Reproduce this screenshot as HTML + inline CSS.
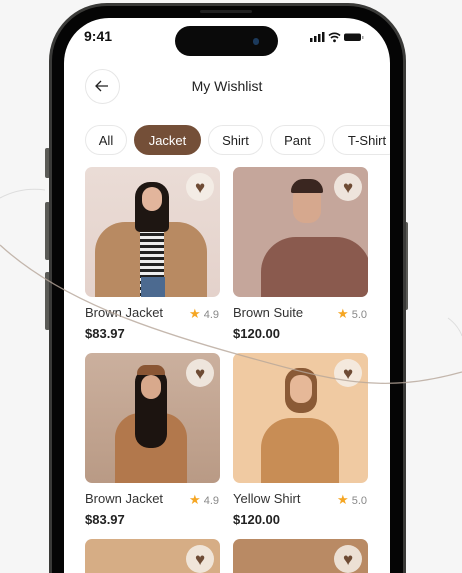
<!DOCTYPE html>
<html style="width:462px;height:573px;overflow:hidden"><head><style>
*{margin:0;padding:0;box-sizing:border-box}
body{width:462px;height:573px;overflow:hidden;background:#f6f6f6;font-family:"Liberation Sans",sans-serif;position:relative}
#wrap{position:absolute;left:0;top:0;width:462px;height:573px;overflow:hidden}
.abs{position:absolute}
.rim{left:49px;top:3px;width:357px;height:570px;border-radius:58px 58px 0 0;background:#3a3a38;}
.body{left:52px;top:6px;width:351px;height:567px;border-radius:55px 55px 0 0;background:#050505}
.screen{left:64px;top:18px;width:326px;height:555px;border-radius:45px 45px 0 0;background:#fff;overflow:hidden}
.btn{background:#5a5a56;border-radius:2px}
.chip{position:absolute;top:107px;height:30px;border:1px solid #e8e8e8;border-radius:15px;font-size:13px;color:#222;display:flex;align-items:center;justify-content:center;background:#fff}
.img{position:absolute;width:135px;height:130px;border-radius:7px;overflow:hidden}
.heart{position:absolute;right:6px;top:6px;width:28px;height:28px;border-radius:50%;background:rgba(245,238,232,.85);display:flex;align-items:center;justify-content:center;color:#6e4b34;font-size:17px;line-height:1}
.name{position:absolute;font-size:13px;color:#333}
.price{position:absolute;font-size:13px;color:#222;font-weight:bold}
.rate{position:absolute;font-size:11px;color:#888}
.rate b{color:#f5a623;font-size:13px;font-weight:normal}
</style></head><body><div id="wrap">
<div class="abs btn" style="left:45px;top:148px;width:5px;height:30px"></div>
<div class="abs btn" style="left:45px;top:202px;width:5px;height:58px"></div>
<div class="abs btn" style="left:45px;top:272px;width:5px;height:58px"></div>
<div class="abs btn" style="left:403px;top:222px;width:5px;height:88px"></div>
<div class="abs rim"></div>
<div class="abs body"></div>
<div class="abs" style="left:200px;top:10px;width:52px;height:3px;background:#222;border-radius:2px"></div>
<div class="abs screen">
  <div class="abs" style="left:20px;top:10px;font-size:14px;font-weight:bold;color:#111">9:41</div>
  <div class="abs" style="left:111px;top:8px;width:103px;height:30px;border-radius:15px;background:#0a0a0a"></div>
  <div class="abs" style="left:189px;top:20px;width:6px;height:7px;border-radius:3px;background:#1c3a5c"></div>
  <svg class="abs" style="left:245px;top:13px" width="56" height="12" viewBox="0 0 56 12">
    <rect x="1" y="7" width="2.5" height="4" fill="#111"/><rect x="5" y="5" width="2.5" height="6" fill="#111"/><rect x="9" y="3" width="2.5" height="8" fill="#111"/><rect x="13" y="1" width="2.5" height="10" fill="#111"/>
    <path d="M20 4.5a8 8 0 0 1 11 0M22 7a5 5 0 0 1 7 0" stroke="#111" stroke-width="1.6" fill="none"/><circle cx="25.5" cy="9.8" r="1.4" fill="#111"/>
    <rect x="35" y="2.5" width="17" height="7.5" rx="2" fill="#111"/><rect x="53" y="5" width="1.5" height="3" fill="#999"/>
  </svg>
  <div class="abs" style="left:21px;top:51px;width:35px;height:35px;border-radius:50%;border:1px solid #e6e6e6"></div>
  <svg class="abs" style="left:30px;top:61px" width="16" height="14" viewBox="0 0 16 14"><path d="M14 7H2M7 2L2 7l5 5" stroke="#222" stroke-width="1.3" fill="none"/></svg>
  <div class="abs" style="left:0;width:326px;top:60px;text-align:center;font-size:14px;color:#222">My Wishlist</div>
  <div class="chip" style="left:21px;width:42px">All</div>
  <div class="chip" style="left:70px;width:67px;background:#744f38;border-color:#744f38;color:#fff">Jacket</div>
  <div class="chip" style="left:144px;width:55px">Shirt</div>
  <div class="chip" style="left:206px;width:55px">Pant</div>
  <div class="chip" style="left:268px;width:70px">T-Shirt</div>

  <div class="img" style="left:21px;top:149px;background:linear-gradient(#eadcd6,#e4d2cb)">
    <div class="abs" style="left:10px;top:55px;width:112px;height:80px;background:#b88a62;border-radius:30px 30px 0 0"></div>
    <div class="abs" style="left:55px;top:60px;width:24px;height:70px;background:repeating-linear-gradient(#222 0 3px,#eee 3px 6px)"></div>
    <div class="abs" style="left:56px;top:110px;width:24px;height:20px;background:#4c6a90"></div>
    <div class="abs" style="left:50px;top:15px;width:34px;height:50px;background:#1e1612;border-radius:15px 15px 5px 5px"></div>
    <div class="abs" style="left:57px;top:20px;width:20px;height:24px;background:#e2b59c;border-radius:10px"></div>
    <div class="heart">♥</div></div>
  <div class="img" style="left:169px;top:149px;background:#c5a69b">
    <div class="abs" style="left:28px;top:70px;width:110px;height:70px;background:#8a5a4e;border-radius:35px 35px 0 0"></div>
    <div class="abs" style="left:60px;top:18px;width:28px;height:38px;background:#d6a88e;border-radius:12px"></div>
    <div class="abs" style="left:58px;top:12px;width:32px;height:14px;background:#3a2620;border-radius:14px 14px 2px 2px"></div>
    <div class="heart">♥</div></div>
  <div class="name" style="left:21px;top:287px">Brown Jacket</div>
  <div class="rate" style="left:125px;top:288px"><b>★</b> 4.9</div>
  <div class="price" style="left:21px;top:308px">$83.97</div>
  <div class="name" style="left:169px;top:287px">Brown Suite</div>
  <div class="rate" style="left:273px;top:288px"><b>★</b> 5.0</div>
  <div class="price" style="left:169px;top:308px">$120.00</div>

  <div class="img" style="left:21px;top:335px;background:linear-gradient(#cbb09e,#b99a85)">
    <div class="abs" style="left:30px;top:60px;width:72px;height:80px;background:#b2784c;border-radius:25px 25px 0 0"></div>
    <div class="abs" style="left:50px;top:15px;width:32px;height:80px;background:#1c1410;border-radius:14px"></div>
    <div class="abs" style="left:56px;top:22px;width:20px;height:24px;background:#d8a98c;border-radius:10px"></div>
    <div class="abs" style="left:52px;top:12px;width:28px;height:10px;background:#8a5634;border-radius:10px 10px 2px 2px"></div>
    <div class="heart">♥</div></div>
  <div class="img" style="left:169px;top:335px;background:#f0caa2">
    <div class="abs" style="left:28px;top:65px;width:78px;height:75px;background:#c88d55;border-radius:30px 30px 0 0"></div>
    <div class="abs" style="left:52px;top:15px;width:32px;height:45px;background:#8a5a36;border-radius:14px"></div>
    <div class="abs" style="left:57px;top:22px;width:22px;height:28px;background:#e6b898;border-radius:10px"></div>
    <div class="heart">♥</div></div>
  <div class="name" style="left:21px;top:473px">Brown Jacket</div>
  <div class="rate" style="left:125px;top:474px"><b>★</b> 4.9</div>
  <div class="price" style="left:21px;top:494px">$83.97</div>
  <div class="name" style="left:169px;top:473px">Yellow Shirt</div>
  <div class="rate" style="left:273px;top:474px"><b>★</b> 5.0</div>
  <div class="price" style="left:169px;top:494px">$120.00</div>

  <div class="img" style="left:21px;top:521px;height:34px;border-radius:7px 7px 0 0;background:#d6ad85"><div class="heart">♥</div></div>
  <div class="img" style="left:169px;top:521px;height:34px;border-radius:7px 7px 0 0;background:#b98a64"><div class="heart">♥</div></div>
</div>
<svg class="abs" style="left:0;top:0;pointer-events:none" width="462" height="573">
  <path d="M0 245 C60 300 150 330 240 355 S380 395 462 372" stroke="#b7a69a" stroke-width="1.3" fill="none" opacity=".8"/>
  <path d="M0 198 C15 190 30 188 45 190" stroke="#ddd" stroke-width="1" fill="none"/>
  <path d="M448 318 C455 323 460 330 462 336" stroke="#ddd" stroke-width="1" fill="none"/>
</svg>
</div></body></html>
